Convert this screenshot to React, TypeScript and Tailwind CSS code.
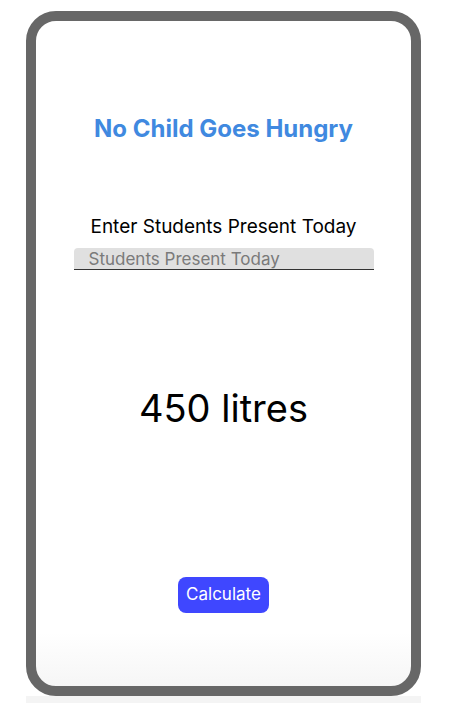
import { useState } from 'react'

export default function App() {
	const [students, setStudents] = useState('')
	const [litres, setLitres] = useState(450)

	const calculate = () => {
		const n = parseInt(students)
		if (!isNaN(n)) setLitres(n * 1)
	}

	return (
		<main className="w-[462px] h-[703px] bg-white font-['Inter','Noto_Sans',sans-serif]">
			<div className="ml-[26px] pt-[11px] w-[395px] h-[703px] flex flex-col">
				{/* Device frame */}
				<div className="h-[685px] border-[10px] border-[#676767] rounded-[30px] bg-gradient-to-b from-white from-92% to-[#f6f6f6] flex flex-col items-center">
					<h1 className="mt-[94px] text-[24px] leading-[28px] font-bold text-[#4089e0]">
						No Child Goes Hungry
					</h1>

					<p className="mt-[73px] text-[19px] text-black leading-[22px]">
						Enter Students Present Today
					</p>
					<input
						value={students}
						onChange={(e) => setStudents(e.target.value)}
						placeholder="Students Present Today"
						className="mt-[10px] w-[300px] h-[22px] bg-[#e0e0e0] rounded-t-[4px] border-b border-[#333] px-[15px] text-[17px] leading-[20px] text-black placeholder:text-[#7a7a7a] outline-none"
					/>

					<p className="mt-[115px] text-[38px] text-black leading-[46px]">
						{litres} litres
					</p>

					<button
						onClick={calculate}
						className="mt-[146px] h-[36px] px-[8px] rounded-[8px] bg-[#3f47ff] text-white text-[17px]"
					>
						Calculate
					</button>
				</div>
				<div className="h-[7px] bg-[#f4f4f4]" />
			</div>
		</main>
	)
}
